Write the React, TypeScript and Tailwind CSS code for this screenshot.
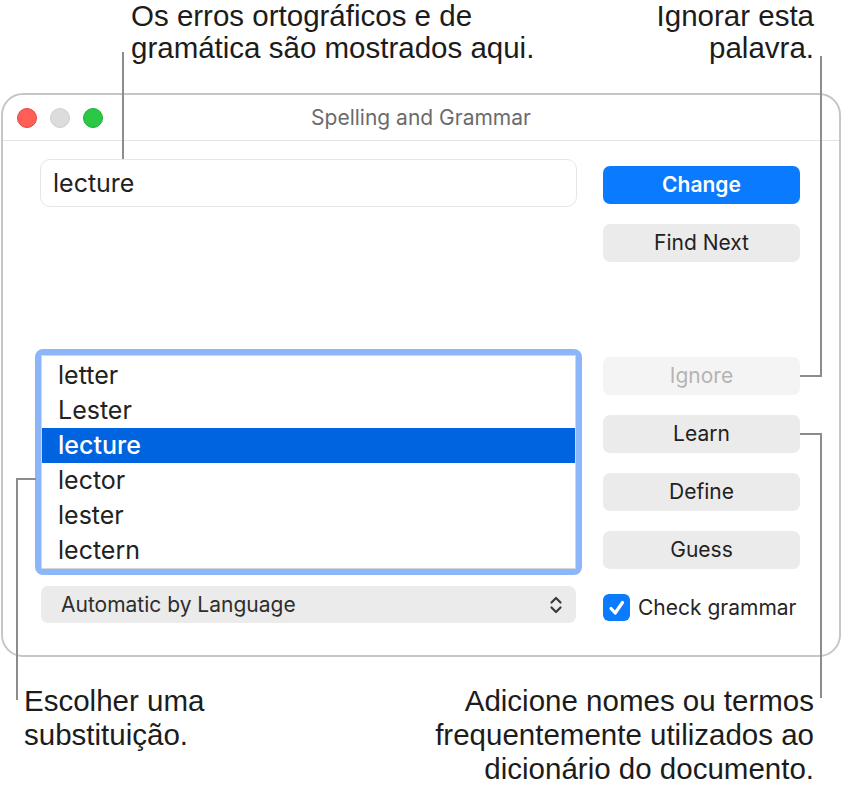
import React from "react";

const suggestions = ["letter", "Lester", "lecture", "lector", "lester", "lectern"];

const Button = ({ label, kind }: { label: string; kind?: "primary" | "disabled" }) => {
  if (kind === "primary")
    return (
      <div className="h-[38px] rounded-[7px] bg-[#0a7aff] text-white font-semibold text-[21px] flex items-center justify-center">
        {label}
      </div>
    );
  if (kind === "disabled")
    return (
      <div className="h-[38px] rounded-[7px] bg-[#f4f4f4] text-[#b4b4b4] text-[21px] flex items-center justify-center">
        {label}
      </div>
    );
  return (
    <div className="h-[38px] rounded-[7px] bg-[#ebebeb] text-[#222] text-[21px] flex items-center justify-center">
      {label}
    </div>
  );
};

export default function App() {
  return (
    <div className="relative w-[843px] h-[793px] bg-white overflow-hidden font-['Liberation_Sans',sans-serif] text-[#1c1c1c]">
      {/* top callouts */}
      <div className="h-[93px] flex justify-between text-[29.5px] leading-[32px]">
        <div className="pl-[131px]">
          Os erros ortográficos e de
          <br />
          gramática são mostrados aqui.
        </div>
        <div className="pr-[29px] text-right">
          Ignorar esta
          <br />
          palavra.
        </div>
      </div>

      {/* window */}
      <div className="ml-[1px] w-[840px] h-[564px] border-2 border-[#c6c6c6] rounded-[22px] bg-white font-['Inter',sans-serif]">
        <div className="relative h-[46px] border-b border-[#e3e3e3] flex items-center pl-[14px] gap-[13px]">
          <span className="w-[20px] h-[20px] rounded-full bg-[#ff5f57] border border-[#e2463f]" />
          <span className="w-[20px] h-[20px] rounded-full bg-[#dcdcdc] border border-[#d0d0d0]" />
          <span className="w-[20px] h-[20px] rounded-full bg-[#2ac845] border border-[#1fae37]" />
          <div className="absolute inset-0 flex items-center justify-center text-[21px] text-[#6b6b6b] pointer-events-none">
            Spelling and Grammar
          </div>
        </div>

        <div className="flex">
          {/* left column */}
          <div className="ml-[37px] w-[537px] flex flex-col">
            <div className="mt-[18px] h-[48px] rounded-[10px] border border-[#e6e6e6] flex items-center pl-[12px] pt-[2px] text-[25px] text-[#222]">
              lecture
            </div>
            <div className="mt-[142px] -mx-[5px] border-[6px] border-[#8db6fa] rounded-[8px]">
              <div className="border border-[#d6d6d6] bg-white pt-[2px]">
                {suggestions.map((s) => (
                  <div
                    key={s}
                    className={
                      s === "lecture"
                        ? "h-[35px] flex items-center pl-[16px] text-[25px] bg-[#0064e1] text-white font-medium"
                        : "h-[35px] flex items-center pl-[16px] text-[25px] text-[#222]"
                    }
                  >
                    {s}
                  </div>
                ))}
              </div>
            </div>
            <div className="mt-[11px] mx-[1px] h-[37px] rounded-[7px] bg-[#ebebeb] flex items-center justify-between pl-[20px] pr-[13px] text-[21px] text-[#2e2e2e]">
              <span>Automatic by Language</span>
              <svg width="14" height="20" viewBox="0 0 14 20" fill="none" stroke="#3a3a3a" strokeWidth="2.2" strokeLinecap="round" strokeLinejoin="round">
                <path d="M2.5 7.5 L7 3 L11.5 7.5" />
                <path d="M2.5 12.5 L7 17 L11.5 12.5" />
              </svg>
            </div>
          </div>

          {/* right column */}
          <div className="ml-[26px] w-[197px] flex flex-col">
            <div className="mt-[25px]">
              <Button label="Change" kind="primary" />
            </div>
            <div className="mt-[20px]">
              <Button label="Find Next" />
            </div>
            <div className="mt-[95px]">
              <Button label="Ignore" kind="disabled" />
            </div>
            <div className="mt-[20px]">
              <Button label="Learn" />
            </div>
            <div className="mt-[20px]">
              <Button label="Define" />
            </div>
            <div className="mt-[20px]">
              <Button label="Guess" />
            </div>
            <div className="mt-[23px] flex items-center gap-[8px] text-[21px] text-[#262626]">
              <span className="w-[27px] h-[27px] rounded-[6px] bg-[#0a7aff] flex items-center justify-center">
                <svg width="20" height="20" viewBox="0 0 20 20" fill="none" stroke="white" strokeWidth="3.2" strokeLinecap="round" strokeLinejoin="round">
                  <path d="M4 10.5 L8.2 15 L15.5 4.5" />
                </svg>
              </span>
              Check grammar
            </div>
          </div>
        </div>
      </div>

      {/* bottom callouts */}
      <div className="mt-[27px] flex justify-between text-[29.5px] leading-[34px]">
        <div className="pl-[24px]">
          Escolher uma
          <br />
          substituição.
        </div>
        <div className="pr-[29px] text-right">
          Adicione nomes ou termos
          <br />
          frequentemente utilizados ao
          <br />
          dicionário do documento.
        </div>
      </div>

      {/* leader lines */}
      <div className="absolute left-[122px] top-[52px] w-[2px] h-[107px] bg-[#8c8c8c]" />
      <div className="absolute left-[820px] top-[56px] w-[2px] h-[321px] bg-[#8c8c8c]" />
      <div className="absolute left-[800px] top-[375px] w-[22px] h-[2px] bg-[#8c8c8c]" />
      <div className="absolute left-[800px] top-[433px] w-[22px] h-[2px] bg-[#8c8c8c]" />
      <div className="absolute left-[820px] top-[433px] w-[2px] h-[265px] bg-[#8c8c8c]" />
      <div className="absolute left-[16px] top-[478px] w-[20px] h-[2px] bg-[#8c8c8c]" />
      <div className="absolute left-[16px] top-[478px] w-[2px] h-[222px] bg-[#8c8c8c]" />
    </div>
  );
}
